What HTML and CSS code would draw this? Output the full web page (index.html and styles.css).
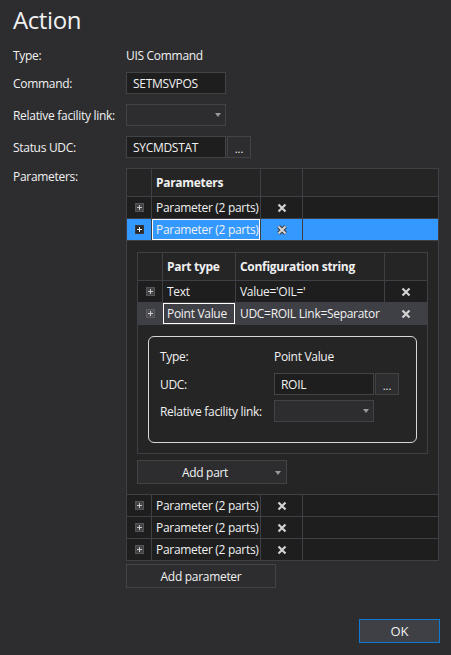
FILE: index.html
```html
<!DOCTYPE html>
<html>
<head>
<meta charset="utf-8">
<link rel="stylesheet" href="styles.css">
</head>
<body>
<div class="page">
  <h1 class="title">Action</h1>
  <div class="form">
    <div class="row row-type"><span class="label">Type:</span><span class="value">UIS Command</span></div>
    <div class="row"><span class="label">Command:</span><div class="input">SETMSVPOS</div></div>
    <div class="row"><span class="label">Relative facility link:</span><div class="select"><span class="caret"></span></div></div>
    <div class="row"><span class="label">Status UDC:</span><div class="input">SYCMDSTAT</div><div class="dots">...</div></div>
    <div class="row row-params">
      <span class="label label-params">Parameters:</span>
      <div class="params">
        <div class="outer">
          <div class="grow hdr">
            <div class="c"></div><div class="c txt">Parameters</div><div class="c"></div><div class="c"></div>
          </div>
          <div class="grow">
            <div class="c ctr"><svg class="exp" width="9" height="9" viewBox="0 0 9 9"><rect x="0.5" y="0.5" width="8" height="8" fill="#434346" stroke="#545458"/><path d="M2 4.5h5M4.5 2v5" stroke="#c8c8c8" stroke-width="1"/></svg></div>
            <div class="c txt">Parameter (2 parts)</div>
            <div class="c ctr"><svg width="10" height="10" viewBox="0 0 10 10"><path d="M1.5 1.5l7 7M8.5 1.5l-7 7" stroke="#d2d2d2" stroke-width="2.2"/></svg></div>
            <div class="c"></div>
          </div>
          <div class="grow sel">
            <div class="c ctr"><svg class="exp" width="9" height="9" viewBox="0 0 9 9"><rect x="0.5" y="0.5" width="8" height="8" fill="#2a2a2c" stroke="#3a3a3e"/><path d="M2 4.5h5M4.5 2v5" stroke="#f4f4f4" stroke-width="1"/></svg></div>
            <div class="c txt focus">Parameter (2 parts)</div>
            <div class="c ctr"><svg width="12" height="12" viewBox="0 0 12 12"><path d="M2.5 2.5l7 7M9.5 2.5l-7 7" stroke="#3c3c40" stroke-width="4"/><path d="M2.5 2.5l7 7M9.5 2.5l-7 7" stroke="#d6d6d6" stroke-width="2"/></svg></div>
            <div class="c"></div>
          </div>
          <div class="detail">
            <div class="inner">
              <div class="irow hdr">
                <div class="c"></div><div class="c txt">Part type</div><div class="c txt">Configuration string</div><div class="c"></div>
              </div>
              <div class="irow">
                <div class="c ctr"><svg class="exp" width="9" height="9" viewBox="0 0 9 9"><rect x="0.5" y="0.5" width="8" height="8" fill="#434346" stroke="#545458"/><path d="M2 4.5h5M4.5 2v5" stroke="#c8c8c8" stroke-width="1"/></svg></div>
                <div class="c txt">Text</div>
                <div class="c txt">Value='OIL='</div>
                <div class="c ctr"><svg width="10" height="10" viewBox="0 0 10 10"><path d="M1.5 1.5l7 7M8.5 1.5l-7 7" stroke="#d2d2d2" stroke-width="2.2"/></svg></div>
              </div>
              <div class="irow hl">
                <div class="c ctr"><svg class="exp" width="9" height="9" viewBox="0 0 9 9"><rect x="0.5" y="0.5" width="8" height="8" fill="#505054" stroke="#5c5c60"/><path d="M2 4.5h5M4.5 2v5" stroke="#d0d0d0" stroke-width="1"/></svg></div>
                <div class="c txt focus">Point Value</div>
                <div class="c txt">UDC=ROIL Link=Separator</div>
                <div class="c ctr"><svg width="10" height="10" viewBox="0 0 10 10"><path d="M1.5 1.5l7 7M8.5 1.5l-7 7" stroke="#d2d2d2" stroke-width="2.2"/></svg></div>
              </div>
              <div class="idetail">
                <div class="pv-box">
                  <div class="prow prow-type"><span class="plabel">Type:</span><span class="value">Point Value</span></div>
                  <div class="prow prow-udc"><span class="plabel">UDC:</span><div class="input">ROIL</div><div class="dots">...</div></div>
                  <div class="prow"><span class="plabel">Relative facility link:</span><div class="select"><span class="caret"></span></div></div>
                </div>
              </div>
            </div>
            <div class="btn add-part"><span class="btn-label">Add part</span><span class="caret"></span></div>
          </div>
          <div class="grow">
            <div class="c ctr"><svg class="exp" width="9" height="9" viewBox="0 0 9 9"><rect x="0.5" y="0.5" width="8" height="8" fill="#434346" stroke="#545458"/><path d="M2 4.5h5M4.5 2v5" stroke="#c8c8c8" stroke-width="1"/></svg></div>
            <div class="c txt">Parameter (2 parts)</div>
            <div class="c ctr"><svg width="10" height="10" viewBox="0 0 10 10"><path d="M1.5 1.5l7 7M8.5 1.5l-7 7" stroke="#d2d2d2" stroke-width="2.2"/></svg></div>
            <div class="c"></div>
          </div>
          <div class="grow">
            <div class="c ctr"><svg class="exp" width="9" height="9" viewBox="0 0 9 9"><rect x="0.5" y="0.5" width="8" height="8" fill="#434346" stroke="#545458"/><path d="M2 4.5h5M4.5 2v5" stroke="#c8c8c8" stroke-width="1"/></svg></div>
            <div class="c txt">Parameter (2 parts)</div>
            <div class="c ctr"><svg width="10" height="10" viewBox="0 0 10 10"><path d="M1.5 1.5l7 7M8.5 1.5l-7 7" stroke="#d2d2d2" stroke-width="2.2"/></svg></div>
            <div class="c"></div>
          </div>
          <div class="grow">
            <div class="c ctr"><svg class="exp" width="9" height="9" viewBox="0 0 9 9"><rect x="0.5" y="0.5" width="8" height="8" fill="#434346" stroke="#545458"/><path d="M2 4.5h5M4.5 2v5" stroke="#c8c8c8" stroke-width="1"/></svg></div>
            <div class="c txt">Parameter (2 parts)</div>
            <div class="c ctr"><svg width="10" height="10" viewBox="0 0 10 10"><path d="M1.5 1.5l7 7M8.5 1.5l-7 7" stroke="#d2d2d2" stroke-width="2.2"/></svg></div>
            <div class="c"></div>
          </div>
        </div>
        <div class="btn add-param"><span class="btn-label">Add parameter</span></div>
      </div>
    </div>
  </div>
  <div class="footer"><div class="ok">OK</div></div>
</div>
</body>
</html>
```

FILE: styles.css
```css
html, body {
  margin: 0;
  padding: 0;
}
body {
  background: #2d2d30;
  color: #f1f1f1;
  font-family: "Open Sans", "Noto Sans", sans-serif;
  font-size: 12px;
  letter-spacing: -0.3px;
}
.page {
  width: 451px;
  height: 655px;
  box-sizing: border-box;
  padding-left: 13px;
  display: flex;
  flex-direction: column;
  overflow: hidden;
}
.title {
  margin: 0 0 8px 0;
  padding-top: 4px;
  font-size: 24px;
  font-weight: 400;
  line-height: 32px;
  letter-spacing: -0.4px;
}
.row {
  display: flex;
  align-items: center;
  height: 22px;
  margin-bottom: 10px;
}
.row-type {
  margin-bottom: 6px;
}
.label {
  width: 113px;
  flex: none;
  white-space: nowrap;
}
.input {
  width: 100px;
  height: 22px;
  box-sizing: border-box;
  border: 1px solid #434346;
  background: #1e1e1e;
  padding-left: 6px;
  display: flex;
  align-items: center;
}
.select {
  width: 100px;
  height: 22px;
  box-sizing: border-box;
  border: 1px solid #434346;
  background: #2d2d30;
  display: flex;
  align-items: center;
  justify-content: flex-end;
  padding-right: 4px;
}
.caret {
  width: 0;
  height: 0;
  border-left: 3px solid transparent;
  border-right: 3px solid transparent;
  border-top: 4px solid #9a9a9a;
}
.dots {
  width: 24px;
  height: 22px;
  box-sizing: border-box;
  margin-left: 1px;
  border: 1px solid #434346;
  background: #2d2d30;
  display: flex;
  align-items: flex-end;
  justify-content: center;
  font-size: 11px;
  line-height: 16px;
  letter-spacing: 0;
}
.row-params {
  align-items: flex-start;
  height: auto;
  margin-bottom: 0;
}
.label-params {
  line-height: 17px;
}
.params {
  display: flex;
  flex-direction: column;
}
.outer {
  width: 313px;
  box-sizing: border-box;
  border-left: 1px solid #3f3f46;
  border-top: 1px solid #3f3f46;
}
.grow {
  display: grid;
  grid-template-columns: 25px 109px 42px 136px;
  height: 22px;
  background: #1e1e1e;
}
.c {
  box-sizing: border-box;
  border-right: 1px solid #3f3f46;
  border-bottom: 1px solid #3f3f46;
  display: flex;
  align-items: center;
  white-space: nowrap;
  overflow: hidden;
}
.txt {
  padding-left: 4px;
}
.ctr {
  justify-content: center;
}
.hdr {
  height: 28px;
  background: #252526;
  font-weight: 700;
}
.sel {
  background: #3399ff;
}
.focus {
  box-shadow: inset 0 0 0 1px #ffffff;
}
.detail {
  box-sizing: border-box;
  border-right: 1px solid #3f3f46;
  border-bottom: 1px solid #3f3f46;
  background: #252526;
  padding: 11px 10px 10px 10px;
  height: 254px;
}
.inner {
  width: 291px;
  box-sizing: border-box;
  border-left: 1px solid #3f3f46;
  border-top: 1px solid #3f3f46;
}
.irow {
  display: grid;
  grid-template-columns: 25px 73px 149px 43px;
  height: 22px;
  background: #1e1e1e;
}
.irow.hdr {
  height: 28px;
  background: #252526;
}
.irow.hl {
  background: #3f3f46;
}
.idetail {
  box-sizing: border-box;
  border-right: 1px solid #3f3f46;
  border-bottom: 1px solid #3f3f46;
  background: #252526;
  padding: 11px 10px 10px 10px;
}
.pv-box {
  border: 1px solid #d8d8d8;
  border-radius: 6px;
  padding: 8px 0 20px 11px;
}
.prow {
  display: flex;
  align-items: center;
  height: 22px;
}
.prow-type {
  margin-bottom: 6px;
}
.prow-udc {
  margin-bottom: 5px;
}
.plabel {
  width: 114px;
  flex: none;
  white-space: nowrap;
}
.btn {
  width: 150px;
  height: 24px;
  box-sizing: border-box;
  border: 1px solid #434346;
  background: #2d2d30;
  display: flex;
  align-items: center;
  justify-content: center;
}
.add-part {
  margin-top: 6px;
  position: relative;
  padding-right: 14px;
}
.add-part .caret {
  position: absolute;
  right: 5px;
  top: 10px;
}
.add-param {
  margin-top: 3px;
}
.footer {
  margin-top: auto;
  display: flex;
  justify-content: flex-end;
  padding: 0 11px 12px 0;
}
.ok {
  width: 81px;
  height: 24px;
  box-sizing: border-box;
  border: 1px solid #0e7ad4;
  background: #3f3f46;
  display: flex;
  align-items: center;
  justify-content: center;
  font-size: 13px;
  letter-spacing: 0;
}
```
